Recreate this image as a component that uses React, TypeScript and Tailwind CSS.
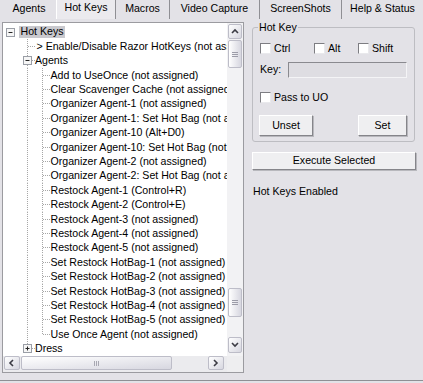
import React from "react";

type Line = "full" | "half" | "none";

const ROW_H = 14.4;

// dotted tree connector cell, drawn as svg
function Gutter({
  w,
  cx,
  line,
  tick,
  box,
}: {
  w: number;
  cx: number;
  line: Line;
  tick?: boolean;
  box?: "minus" | "plus";
}) {
  const cy = 7;
  return (
    <svg width={w} height={ROW_H} viewBox={`0 0 ${w} ${ROW_H}`} className="block shrink-0">
      {line !== "none" && (
        <line
          x1={cx + 0.5}
          y1={0}
          x2={cx + 0.5}
          y2={line === "full" ? ROW_H : cy}
          stroke="#a5a5a5"
          strokeDasharray="1 1"
        />
      )}
      {tick && (
        <line x1={cx + 1} y1={cy + 0.5} x2={w} y2={cy + 0.5} stroke="#a5a5a5" strokeDasharray="1 1" />
      )}
      {box && (
        <g>
          <rect x={cx - 3.5} y={cy - 3.5} width={8} height={8} fill="#f6f6f6" stroke="#9a9ea6" />
          <line x1={cx - 1.5} y1={cy + 0.5} x2={cx + 2.5} y2={cy + 0.5} stroke="#222" />
          {box === "plus" && <line x1={cx + 0.5} y1={cy - 1.5} x2={cx + 0.5} y2={cy + 2.5} stroke="#222" />}
        </g>
      )}
    </svg>
  );
}

const agentItems = [
  "Add to UseOnce (not assigned)",
  "Clear Scavenger Cache (not assigned)",
  "Organizer Agent-1 (not assigned)",
  "Organizer Agent-1: Set Hot Bag (not assigned)",
  "Organizer Agent-10 (Alt+D0)",
  "Organizer Agent-10: Set Hot Bag (not assigned)",
  "Organizer Agent-2 (not assigned)",
  "Organizer Agent-2: Set Hot Bag (not assigned)",
  "Restock Agent-1 (Control+R)",
  "Restock Agent-2 (Control+E)",
  "Restock Agent-3 (not assigned)",
  "Restock Agent-4 (not assigned)",
  "Restock Agent-5 (not assigned)",
  "Set Restock HotBag-1 (not assigned)",
  "Set Restock HotBag-2 (not assigned)",
  "Set Restock HotBag-3 (not assigned)",
  "Set Restock HotBag-4 (not assigned)",
  "Set Restock HotBag-5 (not assigned)",
  "Use Once Agent (not assigned)",
];

const tabs = [
  { label: "Agents", cls: "w-[57px] pl-[2px] pt-[1px] border-r border-r-white" },
  { label: "Hot Keys", cls: "w-[59px] pt-[0px] bg-[#ebeaee] border-r border-r-[#8f8f94]", active: true },
  { label: "Macros", cls: "w-[54px] pt-[1px] border-r border-r-[#8f8f94]" },
  { label: "Video Capture", cls: "w-[90px] pt-[1px] border-r border-r-[#8f8f94]" },
  { label: "ScreenShots", cls: "w-[82px] pt-[1px] border-r border-r-[#8f8f94]" },
  { label: "Help & Status", cls: "w-[81px] pt-[1px]" },
];

const Chevron = ({ dir }: { dir: "up" | "down" | "left" | "right" }) => {
  const pts = {
    up: "1,5 4,2 7,5",
    down: "1,2 4,5 7,2",
    left: "5,1 2,4 5,7",
    right: "2,1 5,4 2,7",
  }[dir];
  return (
    <svg width="8" height="8" viewBox="0 0 8 8">
      <polyline points={pts} fill="none" stroke="#3c3c44" strokeWidth="1.6" />
    </svg>
  );
};

const sbBtn =
  "flex items-center justify-center rounded-[2px] border border-[#bdbdc8] bg-linear-to-br from-white to-[#d7d7e0]";

const VGrip = () => (
  <div className="flex flex-col gap-[1px]">
    <span className="block h-[1px] w-[6px] bg-[#9c9ca8]" />
    <span className="block h-[1px] w-[6px] bg-[#9c9ca8]" />
    <span className="block h-[1px] w-[6px] bg-[#9c9ca8]" />
  </div>
);

function VScroll() {
  return (
    <div className="flex h-[333px] w-[16px] flex-col items-center bg-[#f2f2f4]">
      <div className={`${sbBtn} mt-[1px] h-[15px] w-[14px]`}>
        <Chevron dir="up" />
      </div>
      <div className={`${sbBtn} mt-[1px] h-[28px] w-[14px] bg-linear-to-r`}>
        <VGrip />
      </div>
      <div className={`${sbBtn} mt-[220px] h-[29px] w-[14px] bg-linear-to-r`}>
        <VGrip />
      </div>
      <div className={`${sbBtn} mt-[20px] h-[16px] w-[14px]`}>
        <Chevron dir="down" />
      </div>
    </div>
  );
}

function HScroll() {
  return (
    <div className="flex h-[16px]">
      <div className="flex h-[16px] w-[224px] items-start bg-[#ebebee]">
        <div className={`${sbBtn} ml-[1px] h-[14px] w-[16px]`}>
          <Chevron dir="left" />
        </div>
        <div className={`${sbBtn} ml-[1px] h-[14px] w-[151px] bg-linear-to-b`}>
          <div className="flex gap-[1px]">
            <span className="block h-[5px] w-[1px] bg-[#a8a8b2]" />
            <span className="block h-[5px] w-[1px] bg-[#a8a8b2]" />
            <span className="block h-[5px] w-[1px] bg-[#a8a8b2]" />
          </div>
        </div>
        <div className={`${sbBtn} ml-[36px] h-[14px] w-[16px]`}>
          <Chevron dir="right" />
        </div>
      </div>
      <div className="h-[16px] w-[16px] bg-[#eeeef0]" />
    </div>
  );
}

function Tree() {
  return (
    <div className="mt-[3px] ml-[2px] w-[242px] shrink-0 border border-[#9b9ba0] bg-white">
      <div className="flex">
        <div className="h-[333px] w-[224px] overflow-hidden whitespace-nowrap pt-[1.5px] leading-[14.4px]">
          {/* root */}
          <div className="flex h-[14.4px] items-center">
            <Gutter w={16} cx={7} line="none" box="minus" />
            <span className="flex h-[12px] items-center bg-[#c9c9ce] px-[1.5px]">Hot Keys</span>
          </div>
          <div className="flex h-[14.4px] items-center">
            <span className="block w-[16px] shrink-0" />
            <Gutter w={17} cx={8} line="full" tick />
            <span className="ml-[0.5px]">&gt; Enable/Disable Razor HotKeys (not assigned)</span>
          </div>
          <div className="flex h-[14.4px] items-center">
            <span className="block w-[16px] shrink-0" />
            <Gutter w={16} cx={8} line="full" tick box="minus" />
            <span>Agents</span>
          </div>
          {agentItems.map((t, i) => (
            <div key={t} className="flex h-[14.4px] items-center">
              <span className="block w-[16px] shrink-0" />
              <Gutter w={16} cx={8} line="full" />
              <Gutter w={15} cx={7} line={i === agentItems.length - 1 ? "half" : "full"} tick />
              <span className="ml-[0.5px]">{t}</span>
            </div>
          ))}
          <div className="flex h-[14.4px] items-center">
            <span className="block w-[16px] shrink-0" />
            <Gutter w={16} cx={8} line="half" tick box="plus" />
            <span>Dress</span>
          </div>
        </div>
        <VScroll />
      </div>
      <HScroll />
    </div>
  );
}

const Check = () => (
  <span className="block h-[11px] w-[11px] shrink-0 border border-t-[#7d7d82] border-l-[#7d7d82] border-r-[#e9e9ec] border-b-[#e9e9ec] bg-white" />
);

const btn =
  "flex items-center justify-center border border-t-white border-l-white border-r-[#85858a] border-b-[#85858a] bg-[#efeff1] shadow-[1px_1px_0_#b8b8bd]";

function RightPanel() {
  return (
    <div className="mt-[2px] ml-[8px] flex w-[164px] flex-col">
      <fieldset className="w-[163px] rounded-[3px] border border-[#bdbdc2] pr-[7px] pb-[5px] pl-[7px]">
        <legend className="ml-[-2px] px-[1px] leading-[13px]">Hot Key</legend>
        <div className="mt-[8px] flex h-[13px] items-center">
          <div className="flex w-[54px] items-center gap-[3px]">
            <Check />
            <span>Ctrl</span>
          </div>
          <div className="flex w-[44px] items-center gap-[3px]">
            <Check />
            <span>Alt</span>
          </div>
          <div className="flex items-center gap-[3px]">
            <Check />
            <span>Shift</span>
          </div>
        </div>
        <div className="mt-[7px] flex h-[16px] items-center">
          <span className="w-[28px]">Key:</span>
          <div className="h-[16px] w-[119px] border border-t-[#8a8a8f] border-l-[#8a8a8f] border-r-[#f4f4f6] border-b-[#f4f4f6] bg-[#dedde2]" />
        </div>
        <div className="mt-[13px] flex h-[13px] items-center gap-[3px]">
          <Check />
          <span>Pass to UO</span>
        </div>
        <div className="mt-[11px] flex h-[21px]">
          <div className={`${btn} ml-[-1px] h-[21px] w-[54px]`}>Unset</div>
          <div className={`${btn} ml-[45px] h-[21px] w-[49px]`}>Set</div>
        </div>
      </fieldset>
      <div className={`${btn} mt-[10px] h-[18px] w-[164px]`}>Execute Selected</div>
      <div className="mt-[15px] ml-[1px] leading-[13px]">Hot Keys Enabled</div>
    </div>
  );
}

export default function App() {
  return (
    <div className="flex h-[383px] w-[423px] flex-col overflow-hidden bg-[#e3e2e7] font-['Liberation_Sans',Arial,sans-serif] text-[10.6px] text-black">
      <div className="flex h-[19px] shrink-0">
        {tabs.map((t) => (
          <div key={t.label} className={`flex h-[19px] justify-center leading-[15px] ${t.cls}`}>
            {t.label}
          </div>
        ))}
      </div>
      <div className="flex h-[362px] shrink-0 items-start border-b border-[#8f8f94]">
        <Tree />
        <RightPanel />
      </div>
    </div>
  );
}
